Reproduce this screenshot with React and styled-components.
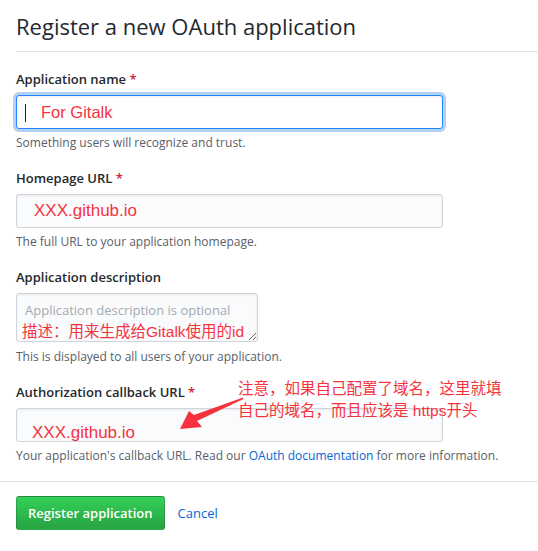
import styled, { createGlobalStyle } from "styled-components";

const GlobalStyle = createGlobalStyle`
  body {
    margin: 0;
    background: #fff;
    font-family: "Open Sans", "Noto Sans", sans-serif;
    color: #24292e;
  }
`;

const Page = styled.div`
  width: 538px;
  height: 551px;
  overflow: hidden;
  padding-left: 16px;
  box-sizing: border-box;
`;

const Header = styled.div`
  padding: 11px 0 10px;
  border-bottom: 1px solid #e1e4e8;
  margin-bottom: 17px;

  h2 {
    margin: 0;
    font-size: 22px;
    font-weight: 400;
    line-height: 30px;
  }
`;

const Group = styled.div`
  position: relative;
  margin-bottom: 16px;
`;

const Label = styled.label`
  display: block;
  font-size: 13px;
  font-weight: 600;
  line-height: 21px;
  margin-bottom: 5px;

  span {
    color: #cb2431;
  }
`;

const FieldWrap = styled.div`
  position: relative;
  width: ${(p) => p.$width}px;
`;

const Input = styled.input`
  display: block;
  box-sizing: border-box;
  width: 100%;
  height: 34px;
  padding: 6px 8px;
  font-size: 14px;
  font-family: inherit;
  background: ${(p) => (p.$focused ? "#fff" : "#fafbfc")};
  border: 1px solid ${(p) => (p.$focused ? "#2188ff" : "#d1d5da")};
  border-radius: 3px;
  box-shadow: ${(p) =>
    p.$focused
      ? "inset 0 1px 2px rgba(27,31,35,.075), 0 0 0 3px rgba(3,102,214,.3)"
      : "inset 0 1px 2px rgba(27,31,35,.075)"};
  outline: none;
`;

const TextArea = styled.textarea`
  display: block;
  box-sizing: border-box;
  width: 100%;
  height: 49px;
  padding: 6px 8px;
  font-size: 13px;
  line-height: 20px;
  font-family: inherit;
  background: #fafbfc;
  border: 1px solid #d1d5da;
  border-radius: 3px;
  box-shadow: inset 0 1px 2px rgba(27, 31, 35, 0.075);
  outline: none;

  &::placeholder {
    color: #a3aab1;
  }
`;

const Note = styled.p`
  margin: ${(p) => p.$gap}px 0 0;
  font-size: 12px;
  line-height: 18px;
  color: #586069;

  a {
    color: #0366d6;
    text-decoration: none;
  }
`;

const Scribble = styled.span`
  position: absolute;
  left: ${(p) => p.$left}px;
  top: ${(p) => p.$top}px;
  font-family: "Liberation Sans", "Noto Sans CJK SC", sans-serif;
  font-size: ${(p) => p.$size}px;
  line-height: 24px;
  color: #f5333f;
  white-space: nowrap;
  pointer-events: none;
`;

const Caret = styled.span`
  position: absolute;
  left: 9px;
  top: 9px;
  width: 1px;
  height: 18px;
  background: #24292e;
`;

const Callout = styled.div`
  position: absolute;
  z-index: 1;
  left: 222px;
  top: -4px;
  font-family: "Liberation Sans", "Noto Sans CJK SC", sans-serif;
  font-size: 15.5px;
  line-height: 22px;
  color: #f5333f;
  white-space: nowrap;
`;

const Arrow = styled.svg`
  position: absolute;
  z-index: 1;
  left: 144px;
  top: 9px;
  overflow: visible;
`;

const Divider = styled.hr`
  margin: 16px 0 14px -16px;
  border: 0;
  border-top: 1px solid #e1e4e8;
`;

const Actions = styled.div`
  display: flex;
  align-items: center;
  gap: 13px;
`;

const Button = styled.button`
  height: 34px;
  padding: 0 11px;
  font-family: inherit;
  font-size: 13px;
  font-weight: 600;
  color: #fff;
  background-image: linear-gradient(-180deg, #34d058 0%, #28a745 90%);
  border: 1px solid rgba(27, 31, 35, 0.2);
  border-radius: 3px;
  cursor: pointer;
`;

const Cancel = styled.a`
  font-size: 13px;
  color: #0366d6;
  text-decoration: none;
`;

export default function App() {
  return (
    <Page>
      <GlobalStyle />
      <Header>
        <h2>Register a new OAuth application</h2>
      </Header>

      <Group>
        <Label>
          Application name <span>*</span>
        </Label>
        <FieldWrap $width={427}>
          <Input $focused readOnly />
          <Caret />
          <Scribble $left={25} $top={5} $size={16.5}>
            For Gitalk
          </Scribble>
        </FieldWrap>
        <Note $gap={5}>Something users will recognize and trust.</Note>
      </Group>

      <Group>
        <Label>
          Homepage URL <span>*</span>
        </Label>
        <FieldWrap $width={427}>
          <Input readOnly />
          <Scribble $left={18} $top={5} $size={17}>
            XXX.github.io
          </Scribble>
        </FieldWrap>
        <Note $gap={5}>The full URL to your application homepage.</Note>
      </Group>

      <Group>
        <Label>Application description</Label>
        <FieldWrap $width={242}>
          <TextArea placeholder="Application description is optional" readOnly />
          <Scribble $left={6} $top={27} $size={15.5}>
            描述：用来生成给Gitalk使用的id
          </Scribble>
        </FieldWrap>
        <Note $gap={6}>This is displayed to all users of your application.</Note>
      </Group>

      <Group>
        <Label>
          Authorization callback URL <span>*</span>
        </Label>
        <Callout>
          注意，如果自己配置了域名，这里就填
          <br />
          自己的域名，而且应该是 https开头
        </Callout>
        <Arrow width="90" height="45" viewBox="0 0 90 45">
          <polygon
            points="20,38 29,20 34,24 83,6.5 83.5,8 37,30 42,36"
            fill="#f5333f"
          />
        </Arrow>
        <FieldWrap $width={427}>
          <Input readOnly />
          <Scribble $left={16} $top={13} $size={17}>
            XXX.github.io
          </Scribble>
        </FieldWrap>
        <Note $gap={5}>
          Your application's callback URL. Read our{" "}
          <a href="#">OAuth documentation</a> for more information.
        </Note>
      </Group>

      <Divider />

      <Actions>
        <Button type="button">Register application</Button>
        <Cancel href="#">Cancel</Cancel>
      </Actions>
    </Page>
  );
}
